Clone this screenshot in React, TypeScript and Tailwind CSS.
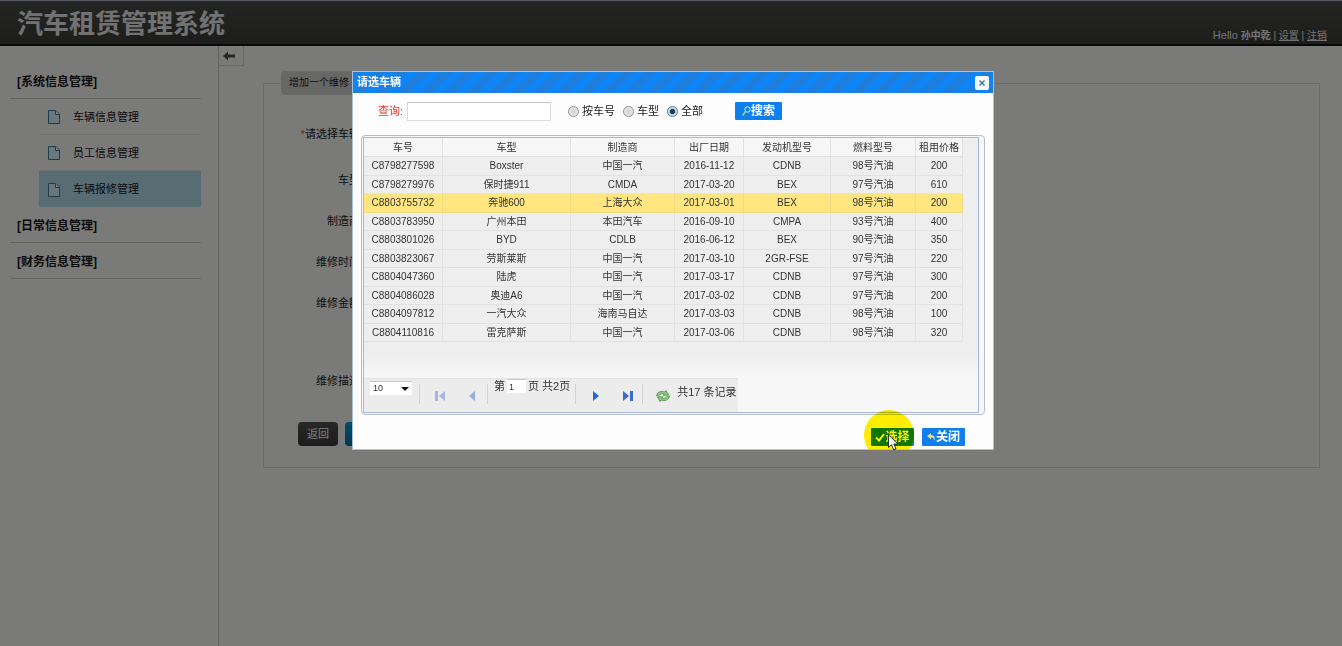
import React from "react";

const columns = [
  { title: "车号", width: "w-[79px]" },
  { title: "车型", width: "w-[128px]" },
  { title: "制造商", width: "w-[104px]" },
  { title: "出厂日期", width: "w-[69px]" },
  { title: "发动机型号", width: "w-[87px]" },
  { title: "燃料型号", width: "w-[85px]" },
  { title: "租用价格", width: "w-[47px]" },
];

const rows = [
  ["C8798277598", "Boxster", "中国一汽", "2016-11-12", "CDNB", "98号汽油", "200"],
  ["C8798279976", "保时捷911", "CMDA", "2017-03-20", "BEX", "97号汽油", "610"],
  ["C8803755732", "奔驰600", "上海大众", "2017-03-01", "BEX", "98号汽油", "200"],
  ["C8803783950", "广州本田", "本田汽车", "2016-09-10", "CMPA", "93号汽油", "400"],
  ["C8803801026", "BYD", "CDLB", "2016-06-12", "BEX", "90号汽油", "350"],
  ["C8803823067", "劳斯莱斯", "中国一汽", "2017-03-10", "2GR-FSE", "97号汽油", "220"],
  ["C8804047360", "陆虎", "中国一汽", "2017-03-17", "CDNB", "97号汽油", "300"],
  ["C8804086028", "奥迪A6", "中国一汽", "2017-03-02", "CDNB", "97号汽油", "200"],
  ["C8804097812", "一汽大众", "海南马自达", "2017-03-03", "CDNB", "98号汽油", "100"],
  ["C8804110816", "雷克萨斯", "中国一汽", "2017-03-06", "CDNB", "98号汽油", "320"],
];

const menu = ["车辆信息管理", "员工信息管理", "车辆报修管理"];

const fields = [
  { id: "car", label: "请选择车辆", required: true },
  { id: "model", label: "车型" },
  { id: "maker", label: "制造商" },
  { id: "time", label: "维修时间" },
  { id: "cost", label: "维修金额" },
];

function PageIcon() {
  return (
    <svg width="12" height="14" viewBox="0 0 12 14" aria-hidden="true">
      <path d="M.5.5h7.500l3.500 3.500v9.500h-11z" fill="#d5eef8" stroke="#3c7896" />
      <path d="M7.500.500v4h4" fill="#fff" stroke="#3c7896" />
    </svg>
  );
}

function Sidebar() {
  return (
    <nav className="w-[219px] shrink-0 border-r border-[#c4c4c2] pt-[17px] pr-[17px] pl-[10px] text-[#151515]">
      <h2 className="h-9 border-b border-[#cbcbc9] pl-[7px] text-xs leading-[38px] font-bold">[系统信息管理]</h2>
      <ul className="ml-[29px] text-[11px]">
        {menu.map((item, i) => (
          <li key={item}>
            <a
              href="#"
              className={
                i === 2
                  ? "flex h-9 items-center gap-[13px] bg-[#b0d9e9] pt-px pl-[9px]"
                  : "flex h-9 items-center gap-[13px] border-b border-[#dededc] pt-px pl-[9px]"
              }
            >
              <PageIcon />
              <span>{item}</span>
            </a>
          </li>
        ))}
      </ul>
      <h2 className="h-9 border-b border-[#cbcbc9] pl-[7px] text-xs leading-[38px] font-bold">[日常信息管理]</h2>
      <h2 className="h-9 border-b border-[#cbcbc9] pl-[7px] text-xs leading-[38px] font-bold">[财务信息管理]</h2>
    </nav>
  );
}

function RepairForm() {
  return (
    <fieldset className="mr-[22px] ml-[19px] border border-[#d6d6d4] pb-[21px] text-[11px] text-[#1c1c1c]">
      <legend className="ml-[17px] h-6 w-28 rounded-sm bg-[#cececb] px-2 text-[10px] leading-6">增加一个维修</legend>
      <div className="pt-[19px]">
        {fields.map((f) => (
          <div key={f.id} className={f.required ? "mb-[5px] flex h-[41px] items-center" : "flex h-[41px] items-center"}>
            <label htmlFor={f.id} className="w-[96px] text-right whitespace-nowrap">
              {f.required && <span className="text-[#e0481c]">*</span>}
              {f.label}
            </label>
            <input id={f.id} className="ml-3 h-6 w-40 border border-gray-300 bg-white px-1" />
          </div>
        ))}
        <div className="flex h-[98px] items-center pt-4">
          <label htmlFor="note" className="w-[96px] text-right whitespace-nowrap">维修描述</label>
          <textarea id="note" className="ml-3 h-16 w-60 resize-none border border-gray-300 bg-white" />
        </div>
        <div className="flex gap-[7px] pl-[34px]">
          <button className="h-6 w-10 rounded-sm bg-linear-to-b from-[#505050] to-[#3a3a3a] text-white">返回</button>
          <button aria-label="提交" className="h-6 w-10 rounded-sm bg-linear-to-b from-[#0d94d2] to-[#0070ac]" />
        </div>
      </div>
    </fieldset>
  );
}

function Separator() {
  return <span className="mt-[5px] h-5 w-px bg-[#d2d2d2]" />;
}

function Pager() {
  return (
    <div className="flex h-[34px] w-[374px] items-start border-t border-[#e2e2e2] bg-[#ececec] text-[11px] text-[#333]">
      <div className="relative ml-[6px] w-[42px]">
        <select aria-label="每页条数" className="h-[14px] w-[42px] appearance-none border-t border-[#c8c8c8] bg-white pl-[3px] text-[9px] leading-3">
          <option>10</option>
        </select>
        <svg className="pointer-events-none absolute top-2 right-[3px]" width="8" height="4" viewBox="0 0 8 4" aria-hidden="true">
          <path d="M0 0h8l-4 4z" fill="#111" />
        </svg>
      </div>
      <div className="ml-[7px] flex"><Separator /></div>
      <button aria-label="首页" className="mt-[12px] ml-[15px]">
        <svg width="10" height="10" viewBox="0 0 10 10"><path d="M0 0h3v10H0zM10 0v10L4 5z" fill="#a7b5e0" /></svg>
      </button>
      <button aria-label="上一页" className="mt-[12px] ml-6">
        <svg width="6" height="10" viewBox="0 0 6 10"><path d="M6 0v10L0 5z" fill="#98aae2" /></svg>
      </button>
      <div className="ml-[12px] flex"><Separator /></div>
      <div className="ml-[6px] flex h-[14px] items-center whitespace-nowrap">
        <label htmlFor="page">第</label>
        <input id="page" defaultValue="1" className="mx-[2px] h-[14px] w-[19px] border-t border-[#c8c8c8] bg-white pl-[2px] text-[9px]" />
        <span>页 共2页</span>
      </div>
      <div className="ml-[5px] flex"><Separator /></div>
      <button aria-label="下一页" className="mt-[12px] ml-[17px]">
        <svg width="6" height="10" viewBox="0 0 6 10"><path d="M0 0v10l6-5z" fill="#2c65d2" /></svg>
      </button>
      <button aria-label="末页" className="mt-[12px] ml-6">
        <svg width="10" height="10" viewBox="0 0 10 10"><path d="M0 0v10l6-5zM7 0h3v10H7z" fill="#3a6ccf" /></svg>
      </button>
      <div className="ml-[9px] flex"><Separator /></div>
      <button aria-label="刷新" className="mt-[11px] ml-[13px]">
        <svg width="14" height="12" viewBox="0 0 14 12" fill="#8fc885" stroke="#478a3f" strokeWidth=".8">
          <path d="M.5 5.800C1 2 5.500.400 8.800 2L10 .500 12.500 5 7.300 5.300 8.100 4C6 3 4 3.700 3 5.800z" />
          <path d="M13.500 6.200C13 10 8.500 11.600 5.200 10L4 11.500 1.500 7 6.700 6.700 5.900 8C8 9 10 8.300 11 6.200z" />
        </svg>
      </button>
      <span className="mt-[5px] ml-[7px] leading-4 whitespace-nowrap">共17 条记录</span>
    </div>
  );
}

function CarTable() {
  return (
    <table className="w-[599px] table-fixed border-separate border-spacing-0 text-center text-[10px] leading-4 text-[#333]">
      <thead>
        <tr className="h-[19px] bg-[#f6f6f6]">
          {columns.map((c) => (
            <th key={c.title} className={`${c.width} border-r border-b border-[#e0e0e0] p-0 pt-[2px] font-normal whitespace-nowrap`}>
              {c.title}
            </th>
          ))}
        </tr>
      </thead>
      <tbody>
        {rows.map((r, i) => (
          <tr key={r[0]} className={i === 2 ? "h-[19px] bg-[#ffe681]" : "odd:h-[19px] even:h-[18px]"}>
            {r.map((v, j) => (
              <td
                key={j}
                className={
                  i === 2
                    ? "border-r border-b border-[#f3dc80] p-0 whitespace-nowrap"
                    : "border-r border-b border-[#e2e2e2] p-0 whitespace-nowrap"
                }
              >
                {v}
              </td>
            ))}
          </tr>
        ))}
      </tbody>
    </table>
  );
}

function Radio({ id, label, on }: { id: string; label: string; on?: boolean }) {
  return (
    <label htmlFor={id} className="flex items-center gap-[3px]">
      <input
        id={id}
        type="radio"
        name="scope"
        defaultChecked={on}
        className="m-0 size-[11px] appearance-none rounded-full border border-[#8f8f8f] bg-[radial-gradient(#cfcfcf,#f2f2f2)] checked:border-[#55798f] checked:bg-[radial-gradient(circle,#123c58_0_35%,#a8cbe0_45%,#e4eef4_75%)]"
      />
      {label}
    </label>
  );
}

function PickerDialog() {
  return (
    <section role="dialog" aria-label="请选车辆" className="relative w-[642px] border border-[#a9c3dd] bg-[#fdfdfd]">
      <header className="flex h-[21px] items-center justify-between bg-[repeating-linear-gradient(135deg,#1f7ddb_0_5px,#0d84f8_8px_13px,#1f7ddb_16px)] pr-1 pl-1 text-[11px] font-bold text-white">
        <h1>请选车辆</h1>
        <button aria-label="关闭窗口" className="flex size-[14px] items-center justify-center rounded-xs bg-[#f4f9ff]">
          <svg width="6" height="6" viewBox="0 0 6 6"><path d="M.5.5l5 5M5.500.500l-5 5" stroke="#3c6c98" strokeWidth="1.300" /></svg>
        </button>
      </header>
      <form className="flex h-[42px] items-center pb-[6px] pl-[25px] text-[11px] text-[#222]">
        <label htmlFor="query" className="text-[#e8382a]">查询:</label>
        <input id="query" className="ml-[4px] h-[19px] w-[144px] border border-[#dcdcdc] border-t-[#c4c4c4] bg-white px-1" />
        <div className="ml-[17px] flex gap-[8px]">
          <Radio id="byNo" label="按车号" />
          <Radio id="byModel" label="车型" />
          <Radio id="byAll" label="全部" on />
        </div>
        <button type="button" className="ml-8 flex h-[18px] w-[47px] items-center justify-center rounded-[1px] bg-[#0f7ff0] text-xs font-bold text-white">
          <svg width="9" height="10" viewBox="0 0 9 10" fill="none" aria-hidden="true">
            <circle cx="5.500" cy="3.500" r="2.700" stroke="#d8ecd8" />
            <path d="M3.500 5.500L.5 9.500" stroke="#9fd46a" strokeWidth="1.500" />
          </svg>
          搜索
        </button>
      </form>
      <div className="mx-2 rounded-sm border border-[#b9bdc6] bg-[#f7f7f8] p-px pr-[5px]">
        <div className="border border-[#a5b9da] bg-[#f7f7f8]">
          <div className="h-[240px] bg-linear-to-b from-[#eeeeee] from-90% to-[#f7f7f7] to-100%">
            <CarTable />
          </div>
          <Pager />
        </div>
      </div>
      <footer className="flex h-[34px] items-end justify-end gap-2 pr-7 pb-[3px] text-xs font-bold text-white">
        <button className="flex h-[18px] w-[43px] items-center justify-center rounded-[1px] bg-[#0f7ff0]">
          <svg width="10" height="9" viewBox="0 0 10 9" fill="none" aria-hidden="true"><path d="M1 4.500l3 3L9 1" stroke="#fff" strokeWidth="2" /></svg>
          选择
        </button>
        <button className="flex h-[18px] w-[43px] items-center justify-center rounded-[1px] bg-[#0f7ff0]">
          <svg width="9" height="9" viewBox="0 0 9 9" aria-hidden="true"><path d="M0 3L4 0v2c3 0 4.500 2 3.500 6C7 5.500 6 4.500 4 4.500v2z" fill="#d9dc9c" /></svg>
          关闭
        </button>
      </footer>
      <div className="pointer-events-none absolute right-[79px] bottom-0 h-[39px] w-[50px] overflow-hidden mix-blend-multiply">
        <div className="size-[50px] rounded-full bg-[#fff000]" />
      </div>
      <svg className="pointer-events-none absolute right-[94px] -bottom-[2px]" width="11" height="17" viewBox="0 0 11 17" aria-hidden="true">
        <path d="M.5.8v12.700l3-2.800 2.200 5.300 2.300-1-2.200-5h4z" fill="#fff" stroke="#222" strokeWidth=".9" />
      </svg>
    </section>
  );
}

export default function App() {
  return (
    <div className="flex min-h-screen flex-col bg-[#f4f4f2] font-['Liberation_Sans','Noto_Sans_CJK_SC',sans-serif]">
      <header className="flex h-[46px] items-end justify-between border-t border-b-2 border-t-[#a9b4c0] border-b-[#101010] bg-linear-to-b from-[#4a4a48] to-[#3a3a38] pr-[15px] pl-[17px] text-[#e6e6e6]">
        <h1 className="text-[26px] leading-10 font-bold text-[#e4e4e4]">汽车租赁管理系统</h1>
        <p className="text-[10px] leading-4">
          <span className="text-[11px]">Hello</span> <b>孙中乾</b> | <a href="#" className="underline">设置</a> | <a href="#" className="underline">注销</a>
        </p>
      </header>
      <div className="flex flex-1">
        <Sidebar />
        <main className="min-w-0 flex-1 pl-[25px]">
          <div className="-ml-[25px] h-[25px]">
            <button aria-label="收起菜单" className="flex h-5 w-[25px] items-center justify-center border-r border-b border-[#cfcfcd]">
              <svg width="12" height="10" viewBox="0 0 12 10" className="mr-1"><path d="M0 5l5-4.500V3.500h7v3H5v3z" fill="#4c4c4c" /></svg>
            </button>
          </div>
          <RepairForm />
        </main>
      </div>
      <div className="fixed inset-0 flex items-start justify-center bg-black/50 pt-[71px] pl-1">
        <PickerDialog />
      </div>
    </div>
  );
}
